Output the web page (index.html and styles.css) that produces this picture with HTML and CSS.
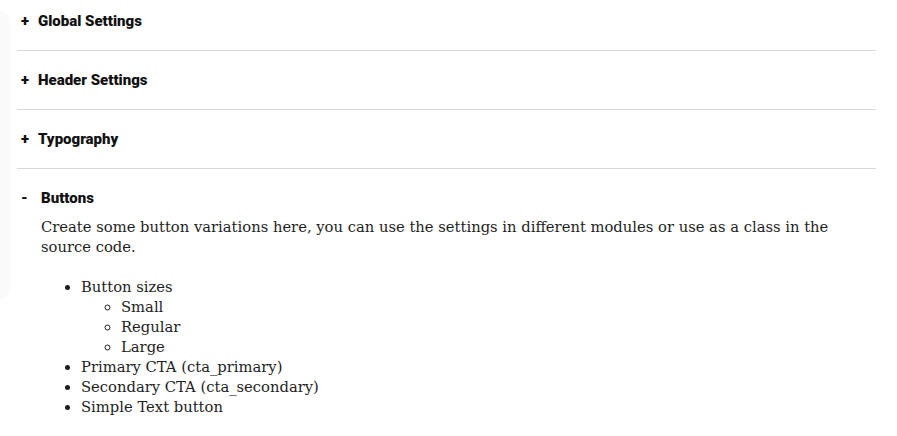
FILE: index.html
```html
<!DOCTYPE html>
<html lang="en">
  <head>
    <meta charset="UTF-8" />
    <meta name="viewport" content="width=device-width, initial-scale=1.0" />
    <link rel="stylesheet" href="styles.css">
  </head>
  <body>
    <div class="side-panel"></div>
    <div id="settings">
      <div class="section">
        <div class="section-title"><span class="toggle">+</span>Global Settings</div>
      </div>
      <div class="section">
        <div class="section-title"><span class="toggle">+</span>Header Settings</div>
      </div>
      <div class="section">
        <div class="section-title"><span class="toggle">+</span>Typography</div>
      </div>
      <div class="section open">
        <div class="section-title"><span class="toggle">-</span>Buttons</div>
        <div class="section-body">
          <p>
            Create some button variations here, you can use the settings in different modules or use as a class in the
            source code.
          </p>
          <ul>
            <li>
              Button sizes
              <ul>
                <li>Small</li>
                <li>Regular</li>
                <li>Large</li>
              </ul>
            </li>
            <li>Primary CTA (cta_primary)</li>
            <li>Secondary CTA (cta_secondary)</li>
            <li>Simple Text button</li>
          </ul>
        </div>
      </div>
    </div>
  </body>
</html>
```

FILE: styles.css
```css
body {
  margin: 0;
  padding: 0;
  background-color: #fff;
  font-family: "DejaVu Serif", serif;
  color: #1e1e1e;
  overflow: hidden;
}

.side-panel {
  position: absolute;
  left: -20px;
  top: 10px;
  width: 30px;
  height: 290px;
  background-color: #fafafa;
  border-radius: 0 12px 12px 0;
}

#settings {
  position: relative;
  margin-left: 17px;
  width: 859px;
}

.section {
  border-bottom: 1px solid #d9d9d9;
}

.section.open {
  border-bottom: none;
}

.section-title {
  font-family: Roboto, "Liberation Sans", sans-serif;
  font-weight: 900;
  font-size: 15px;
  line-height: 18px;
  color: #111;
  padding: 20px 0 20px 4px;
}

.section:first-child .section-title {
  padding-top: 12px;
}

.toggle {
  display: inline-block;
  width: 17px;
}

.open .toggle {
  width: 20px;
}

.section-body {
  padding: 0 20px 0 24px;
  margin-top: -10px;
  font-size: 14.75px;
  line-height: 20px;
}

.section-body p {
  margin: 0 0 20px 0;
}

.section-body ul {
  margin: 0;
  padding-left: 40px;
}

.section-body ul ul {
  list-style-type: circle;
}
```
